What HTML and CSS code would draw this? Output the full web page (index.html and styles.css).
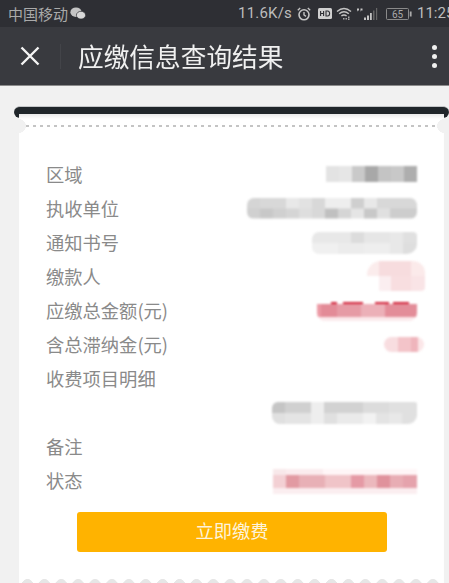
FILE: index.html
```html
<!DOCTYPE html>
<html lang="zh-CN">
<head>
<meta charset="utf-8">
<title>应缴信息查询结果</title>
<link rel="stylesheet" href="styles.css">
</head>
<body>
<div class="app">
  <div class="status">
    <div class="status-left">
      <span class="carrier">中国移动</span>
      <svg class="wechat" viewBox="0 0 16 13"><ellipse cx="6" cy="5.2" rx="5.6" ry="4.8" fill="#c4c4c4"/><ellipse cx="11" cy="8.2" rx="4.6" ry="3.9" fill="#d8d8d8" stroke="#2e2f34" stroke-width=".7"/></svg>
    </div>
    <div class="status-right">
      <span class="speed">11.6K/s</span>
      <svg class="ic alarm" viewBox="0 0 14 14"><circle cx="7" cy="7.8" r="5" fill="none" stroke="#c4c4c4" stroke-width="1.6"/><path d="M7 5v3l2 1.4M.8 3.2 3.2 1M13.2 3.2 10.8 1" fill="none" stroke="#c4c4c4" stroke-width="1.4"/></svg>
      <svg class="ic hd" viewBox="0 0 14 11"><rect width="14" height="11" rx="1.5" fill="#d0d0d0"/><path d="M2.6 3v5M2.6 5.5h3M5.6 3v5M8 3v5h1.6q2-.2 2-2.5T9.600 3z" fill="none" stroke="#2e2f34" stroke-width="1.1"/></svg>
      <svg class="ic wifi" viewBox="0 0 16 13"><path d="M1 4.500Q8-1.500 15 4.500M3.200 6.800Q8 2.500 12.800 6.800M5.400 9Q8 6.800 10.600 9" fill="none" stroke="#c4c4c4" stroke-width="1.4"/><path d="M7 11h1.500v1.500H7zM9.500 11H11v1.500H9.500zM12 9.500h1.500V11H12zM12 11.500h1.500V13H12z" fill="#aaa"/></svg>
      <svg class="ic signal" viewBox="0 0 22 13"><path d="M1 1.500h2v2H1.500L1 5zM4.500 1.500h2v2H5L4.500 5z" fill="#c4c4c4"/><path d="M8 10.500h2V13H8zM11 8.500h2V13h-2zM14 6h1.800v7H14z" fill="#c4c4c4"/><path d="M17 3.500h1.500V13H17zM20 1h1.200v12H20z" fill="#666"/></svg>
      <svg class="ic battery" viewBox="0 0 26 12"><rect x=".5" y=".5" width="22" height="11" rx="1" fill="none" stroke="#8a8a8a"/><rect x="23.800" y="3.500" width="1.800" height="5" fill="#aaa"/><text class="batt-num" x="11.500" y="9.600" text-anchor="middle">65</text></svg>
      <span class="time">11:25</span>
    </div>
  </div>

  <div class="nav">
    <svg class="close" viewBox="0 0 20 20"><path d="M1.500 1.500 18.500 18.500M18.500 1.500 1.500 18.500" fill="none" stroke="#f4f4f4" stroke-width="2.400"/></svg>
    <span class="divider"></span>
    <span class="title">应缴信息查询结果</span>
    <span class="kebab"><i></i><i></i><i></i></span>
  </div>

  <div class="main">
    <div class="slot"></div>
    <div class="card">
      <div class="perforation"></div>
      <div class="rows">
        <div class="row"><span class="label">区域</span><span class="blob b1"></span></div>
        <div class="row"><span class="label">执收单位</span><span class="blob b2"></span></div>
        <div class="row"><span class="label">通知书号</span><span class="blob b3"></span></div>
        <div class="row"><span class="label">缴款人</span><span class="blob b4"></span></div>
        <div class="row"><span class="label">应缴总金额(元)</span><span class="blob b5"></span></div>
        <div class="row"><span class="label">含总滞纳金(元)</span><span class="blob b6"></span></div>
        <div class="row"><span class="label">收费项目明细</span></div>
        <div class="row"><span class="label"></span><span class="blob b8"></span></div>
        <div class="row"><span class="label">备注</span></div>
        <div class="row"><span class="label">状态</span><span class="blob b10"></span></div>
      </div>
      <div class="pay">立即缴费</div>
      <div class="scallops"></div>
    </div>
  </div>
</div>
</body>
</html>
```
FILE: styles.css
```css
* { box-sizing: border-box; }
html, body { margin: 0; height: 100%; overflow: hidden; background: #f1f1f1; }
body { font-family: "Noto Sans CJK SC", "Liberation Sans", sans-serif; }

.app { width: 449px; height: 583px; overflow: hidden; display: flex; flex-direction: column; filter: blur(.5px); }

.status { flex: none; height: 27px; padding-left: 8px; background: #2e2f34; color: #b4b4b4; display: flex; align-items: center; overflow: hidden; }
.status-left { flex: none; width: 230px; display: flex; align-items: center; gap: 2px; }
.carrier { font-size: 15px; line-height: 27px; color: #aaa; }
.wechat { width: 16px; height: 13px; }
.status-right { flex: none; display: flex; align-items: center; gap: 5px; white-space: nowrap; }
.speed, .time { font-family: "Roboto", "Liberation Sans", sans-serif; font-size: 15px; line-height: 27px; color: #bdbdbd; }
.speed { letter-spacing: .2px; }
.ic { flex: none; display: block; }
.alarm { width: 14px; height: 14px; }
.hd { width: 14px; height: 11px; margin-left: 2px; }
.wifi { width: 16px; height: 13px; margin-left: -1px; }
.signal { width: 22px; height: 13px; margin-left: -1px; }
.battery { width: 26px; height: 12px; margin-left: 3px; }
.batt-num { font-family: "Roboto", sans-serif; font-size: 10px; fill: #aaa; }

.nav { flex: none; height: 59px; padding-left: 20px; background: #393a3f; border-bottom: 1px solid #8c8c8c; display: flex; align-items: center; }
.close { width: 20px; height: 20px; flex: none; }
.divider { width: 1px; height: 25px; margin-left: 20px; background: #434449; flex: none; }
.title { margin-left: 17px; font-size: 25.700px; line-height: 1; color: #f0f0f0; white-space: nowrap; }
.kebab { margin-left: auto; width: 30px; display: flex; flex-direction: column; align-items: center; gap: 4px; }
.kebab i { width: 5px; height: 5px; border-radius: 50%; background: #f0f0f0; display: block; }

.main { flex: 1; min-height: 0; padding: 20px 0 0 14px; display: flex; flex-direction: column; }
.slot { flex: none; height: 12px; background: #20262a; border-radius: 6px; border-top: 1px solid #c4c6c8; }
.card { position: relative; flex: 1; margin: -4px 5px 0 5px; background: #fff; display: flex; flex-direction: column; box-shadow: inset 0 5px 4px -3px #e4e4e4; }
.perforation { position: relative; height: 27px; flex: none; }
.perforation::before { content: ""; position: absolute; left: 7px; right: 7px; top: 11px; height: 2px; background: repeating-linear-gradient(90deg, #c4c4c4 0 3px, transparent 3px 7px); }
.perforation::after { content: ""; position: absolute; left: -7px; right: -7px; top: 5px; height: 14px; background: radial-gradient(circle 7px at 7px 7px, #f1f1f1 98%, transparent) left no-repeat, radial-gradient(circle 7px at 7px 7px, #f1f1f1 98%, transparent) right no-repeat; background-size: 14px 14px; }

.rows { padding: 16px 27px 0 27px; flex: none; }
.row { height: 34px; display: flex; align-items: center; justify-content: space-between; }
.label { font-size: 18.300px; line-height: 34px; color: #8a8a8a; white-space: nowrap; }

.blob { display: block; flex: none; filter: blur(1px); background-repeat: no-repeat; }
.b1 { width: 91px; height: 16px; background-image: linear-gradient(90deg, #e3e3e3 0 13px, #e6e6e6 0 26px, #c9c9c9 0 39px, #a8a8a8 0 52px, #c4c4c4 0 65px, #c8c8c8 0 78px, #aeaeae 0); }
.b2 { width: 170px; height: 21px; border-radius: 7px; background-image:
  linear-gradient(90deg, #d5d5d5 0 13px, #d8d8d8 0 39px, #e8e8e8 0 52px, #e2e2e2 0 65px, #d8d8d8 0 78px, #eee 0 104px, #cfcfcf 0 117px, #e8e8e8 0 130px, #d8d8d8 0),
  linear-gradient(90deg, #d0d0d0 0 13px, #c8c8c8 0 26px, #d0d0d0 0 39px, #d5d5d5 0 52px, #dedede 0 65px, #d8d8d8 0 78px, #c0c0c0 0 91px, #d5d5d5 0 104px, #e5e5e5 0 117px, #c8c8c8 0 130px, #e0e0e0 0 143px, #cdcdcd 0);
  background-size: 100% 50%; background-position: top, bottom; }
.b3 { width: 105px; height: 22px; margin-top: 2px; border-radius: 7px 4px 10px 7px; background-image:
  linear-gradient(90deg, #e8e8e8 0 39px, #dcdcdc 0 52px, #e6e6e6 0 78px, #e8e8e8 0 91px, #e0e0e0 0),
  linear-gradient(90deg, #f0f0f0 0 26px, #ececec 0 52px, #eee 0 78px, #e8e8e8 0 91px, #dedede 0);
  background-size: 100% 50%; background-position: top, bottom; }
.b4 { width: 58px; height: 30px; margin-right: -8px; border-radius: 14px 12px 4px 14px; background-image:
  linear-gradient(90deg, #fbecec 0 12px, #f7dcde 0 44px, #fbeaea 0),
  linear-gradient(90deg, #fff 0 12px, #fbeef0 0 24px, #f8dee0 0 44px, #f9e4e6 0);
  background-size: 100% 50%; background-position: top, bottom; }
.b5 { width: 100px; height: 19px; margin-top: 3px; border-radius: 2px 2px 8px 8px; background-image:
  linear-gradient(90deg, transparent 0 14px, #d3273d 0 20px, transparent 0 26px, #d3273d 0 46px, transparent 0 58px, #d3273d 0 72px, transparent 0 76px, #d3273d 0 92px, transparent 0),
  linear-gradient(90deg, #ec9aa5 0 4px, #e38b97 0 20px, #e69ba5 0 44px, #ecb0b8 0 68px, #e38d99 0),
  linear-gradient(#fbeaec, #fbeaec);
  background-size: 100% 2px, 100% 13px, 100% 4px; background-position: top, 0 2px, bottom; }
.b6 { width: 40px; height: 15px; margin-right: -7px; border-radius: 8px; background-image: linear-gradient(90deg, #f8dde0 0 14px, #f3c4c9 0 27px, #efb5bc 0 34px, #fbe6e8 0); }
.b8 { width: 145px; height: 22px; margin-top: 2px; border-radius: 6px 2px 9px 8px; background-image:
  linear-gradient(90deg, #c5c5c5 0 13px, #d0d0d0 0 39px, #eee 0 52px, #d2d2d2 0 91px, #dcdcdc 0 117px, #e0e0e0 0),
  linear-gradient(90deg, #e0e0e0 0 13px, #e4e4e4 0 39px, #eee 0 52px, #e0e0e0 0 65px, #eaeaea 0 91px, #f2f2f2 0 104px, #e4e4e4 0 117px, #e8e8e8 0 130px, #e0e0e0 0);
  background-size: 100% 50%; background-position: top, bottom; }
.b10 { width: 144px; height: 25px; margin-top: 2px; background-image:
  linear-gradient(90deg, #f8e8ea 0 13px, #fbecee 0 50px, #fff6f7 0 144px),
  linear-gradient(90deg, #f3d0d4 0 13px, #e29aa2 0 26px, #e8b0b6 0 52px, #f0c4c8 0 78px, #e59aa5 0 91px, #ecb8bd 0 104px, #e0929c 0 117px, #e8adb4 0 130px, #e5a3ac 0),
  linear-gradient(#fbeef0, #fbeef0);
  background-size: 100% 6px, 100% 13px, 100% 6px; background-position: top, 0 6px, bottom; }

.pay { flex: none; height: 40px; margin: 15px 57px 0 58px; border-radius: 3px; background: #ffb300; color: #fdf3dc; font-size: 18.300px; line-height: 37px; text-align: center; }
.scallops { position: absolute; left: 0; right: 0; bottom: 0; height: 4px; background: radial-gradient(circle 6px at 8.500px 6px, #e6e6e6 96%, transparent) 0 0 / 16.900px 4px repeat-x; }
```
